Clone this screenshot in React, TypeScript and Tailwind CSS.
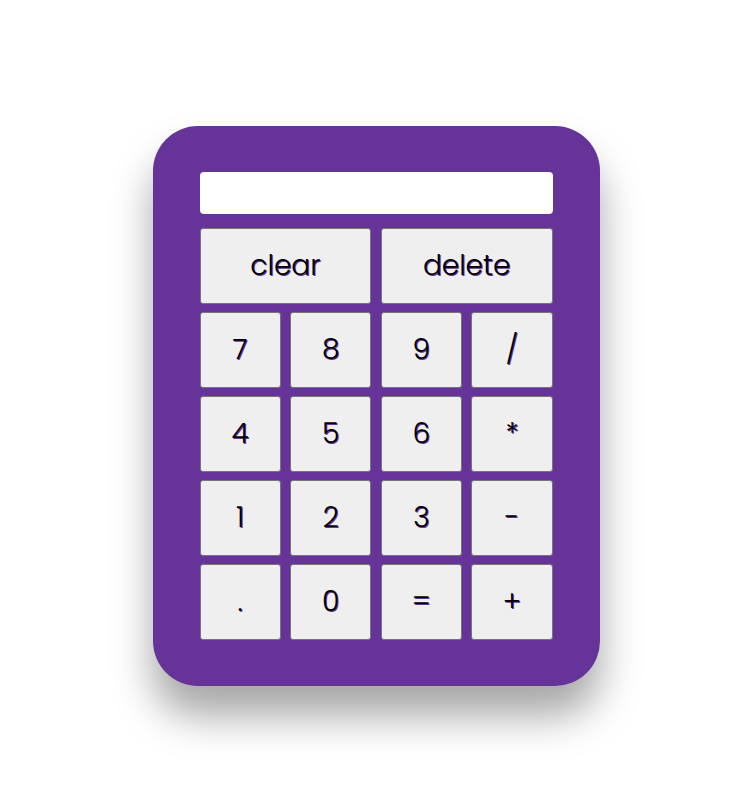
import React from 'react';

const KEYS = ['7', '8', '9', '/', '4', '5', '6', '*', '1', '2', '3', '-', '.', '0', '=', '+'];

const keyClass =
  'h-[76px] bg-[#efefef] border border-[#767676] rounded-[3px] text-[28px] font-light text-black [text-shadow:1px_1px_0_#663399] flex items-center justify-center';

const App: React.FC = () => {
  return (
    <div
      className="min-h-screen bg-white flex items-center justify-center"
      style={{ fontFamily: 'Poppins, Lato, "Open Sans", sans-serif' }}
    >
      <div className="bg-[#663399] rounded-[45px] pt-[46px] pb-[46px] pl-[47px] pr-[47px] shadow-[0_30px_40px_rgba(0,0,0,0.35)] mt-[5px] mr-[4px]">
        <div className="w-[353px] h-[42px] bg-white rounded-[4px]" />
        <div className="mt-[14px] w-[353px] grid grid-cols-4 gap-x-[9.6px] gap-y-[8px]">
          <button className={`${keyClass} col-span-2`}>clear</button>
          <button className={`${keyClass} col-span-2`}>delete</button>
          {KEYS.map(k => (
            <button key={k} className={keyClass}>
              {k}
            </button>
          ))}
        </div>
      </div>
    </div>
  );
};

export default App;
